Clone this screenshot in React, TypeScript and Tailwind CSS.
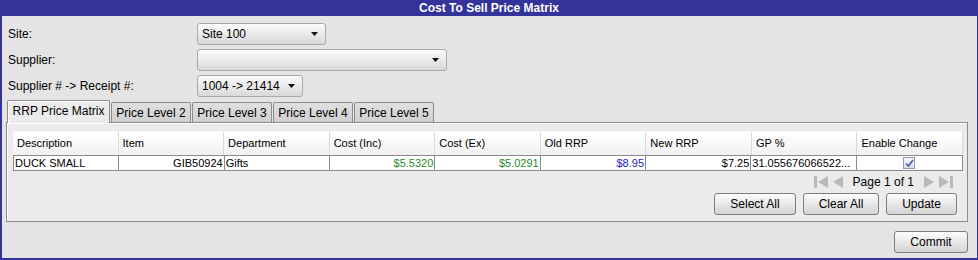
import type { ReactNode } from "react";

const columns = [
  "Description",
  "Item",
  "Department",
  "Cost (Inc)",
  "Cost (Ex)",
  "Old RRP",
  "New RRP",
  "GP %",
  "Enable Change",
];

const tabs = ["Price Level 2", "Price Level 3", "Price Level 4", "Price Level 5"];

export default function App() {
  return (
    <div className="flex h-[260px] w-[978px] flex-col bg-[#333399] font-['Liberation_Sans',Arial,sans-serif] text-[12px] text-black">
      <div className="flex h-[16px] items-center justify-center text-[12px] font-bold leading-none text-white">
        Cost To Sell Price Matrix
      </div>

      <div className="mb-[2px] ml-[2px] mr-[1px] flex flex-1 flex-col bg-[#e4e4e4] px-[4px] pt-[7px] pb-[5px]">
        <div className="flex flex-col gap-[4px] pl-[2px]">
          <FormRow label="Site:">
            <Combo width="w-[129px]" value="Site 100" />
          </FormRow>
          <FormRow label="Supplier:">
            <Combo width="w-[250px]" value="" />
          </FormRow>
          <FormRow label="Supplier # -> Receipt #:">
            <Combo width="w-[106px]" value="1004 -> 21414" />
          </FormRow>
        </div>

        {/* tab strip */}
        <div className="mt-[3px] flex h-[22px] items-end gap-[1px] pl-[1px]">
          <div className="relative z-10 -mb-px flex h-[23px] w-[103px] items-center justify-center rounded-t-[2px] border border-b-0 border-[#8c8c8c] bg-[#ebebeb] pb-[2px] shadow-[inset_1px_1px_0_#ffffff]">
            RRP Price Matrix
          </div>
          {tabs.map((t) => (
            <div
              key={t}
              className="flex h-[20px] w-[80px] items-center justify-center rounded-t-[2px] border border-b-0 border-[#8c8c8c] bg-gradient-to-b from-[#e0e0e0] to-[#cfcfcf]"
            >
              {t}
            </div>
          ))}
        </div>

        <div className="mr-[5px] flex flex-col border border-[#8c8c8c] bg-[#ebebeb] pt-[8px] pr-[5px] pb-[6px] pl-[6px] shadow-[inset_1px_1px_0_#ffffff]">
          <PriceTable />

          <div className="mt-[3px] flex h-[15px] items-center justify-end gap-[3px] pr-[9px] text-[12px]">
            <svg width="15" height="12" viewBox="0 0 15 12">
              <rect x="0" y="0" width="3" height="12" fill="#b9b9b9" />
              <path d="M14 0 L4 6 L14 12 Z" fill="#b9b9b9" />
            </svg>
            <svg width="12" height="12" viewBox="0 0 12 12">
              <path d="M11 0 L1 6 L11 12 Z" fill="#b9b9b9" />
            </svg>
            <span className="mx-[6px]">Page 1 of 1</span>
            <svg width="12" height="12" viewBox="0 0 12 12">
              <path d="M1 0 L11 6 L1 12 Z" fill="#b9b9b9" />
            </svg>
            <svg width="15" height="12" viewBox="0 0 15 12">
              <path d="M1 0 L11 6 L1 12 Z" fill="#b9b9b9" />
              <rect x="12" y="0" width="3" height="12" fill="#b9b9b9" />
            </svg>
          </div>

          <div className="mt-[4px] flex justify-end gap-[7px] pr-[5px]">
            <Button width="w-[82px]">Select All</Button>
            <Button width="w-[76px]">Clear All</Button>
            <Button width="w-[71px]">Update</Button>
          </div>
        </div>

        <div className="mt-auto flex justify-end pr-[5px]">
          <Button width="w-[74px]">Commit</Button>
        </div>
      </div>
    </div>
  );
}

function FormRow({ label, children }: { label: string; children: ReactNode }) {
  return (
    <div className="flex h-[22px] items-center">
      <span className="w-[189px]">{label}</span>
      {children}
    </div>
  );
}

function Combo({ width, value }: { width: string; value: string }) {
  return (
    <div
      className={`${width} flex h-[22px] items-center justify-between rounded-[3px] border border-[#a9a9a9] bg-gradient-to-b from-[#fbfbfb] to-[#d9d9d9] pl-[4px] pr-[7px]`}
    >
      <span>{value}</span>
      <svg width="7" height="4" viewBox="0 0 7 4">
        <path d="M0 0 H7 L3.5 4 Z" fill="#111" />
      </svg>
    </div>
  );
}

function Button({ width, children }: { width: string; children: ReactNode }) {
  return (
    <div
      className={`${width} flex h-[22px] items-center justify-center rounded-[3px] border border-[#7d7d7d] bg-gradient-to-b from-[#fdfdfd] to-[#d3d3d3] text-[12px]`}
    >
      {children}
    </div>
  );
}

function PriceTable() {
  return (
    <div className="w-[950px] text-[11px]">
      <div className="grid h-[24px] grid-cols-9 border-t border-[#f6f6f6] bg-gradient-to-b from-[#ffffff] to-[#f1f1f1]">
        {columns.map((c) => (
          <div key={c} className="flex items-center border-r border-[#dadada] pl-[4px]">
            {c}
          </div>
        ))}
      </div>
      <div className="grid h-[16px] grid-cols-9 border border-[#8a8a8a] bg-white leading-none">
        <Cell>DUCK SMALL</Cell>
        <Cell right>GIB50924</Cell>
        <Cell>Gifts</Cell>
        <Cell right color="text-[#1f8a1f]">$5.5320</Cell>
        <Cell right color="text-[#1f8a1f]">$5.0291</Cell>
        <Cell right color="text-[#1b1bc8]">$8.95</Cell>
        <Cell right>$7.25</Cell>
        <Cell>31.055676066522...</Cell>
        <div className="flex items-center justify-center">
          <span className="flex h-[12px] w-[12px] items-center justify-center border border-[#8e9bb5] bg-gradient-to-b from-[#f4f6fa] to-[#d9dfea]">
            <svg width="9" height="9" viewBox="0 0 9 9">
              <path d="M1 4.5 L3.5 7 L8 1" stroke="#4b5fa0" strokeWidth="1.6" fill="none" />
            </svg>
          </span>
        </div>
      </div>
    </div>
  );
}

function Cell({
  children,
  right,
  color = "text-black",
}: {
  children: ReactNode;
  right?: boolean;
  color?: string;
}) {
  return (
    <div
      className={`flex items-center overflow-hidden whitespace-nowrap border-r border-[#8a8a8a] px-[1px] ${color} ${
        right ? "justify-end" : "justify-start"
      }`}
    >
      {children}
    </div>
  );
}
